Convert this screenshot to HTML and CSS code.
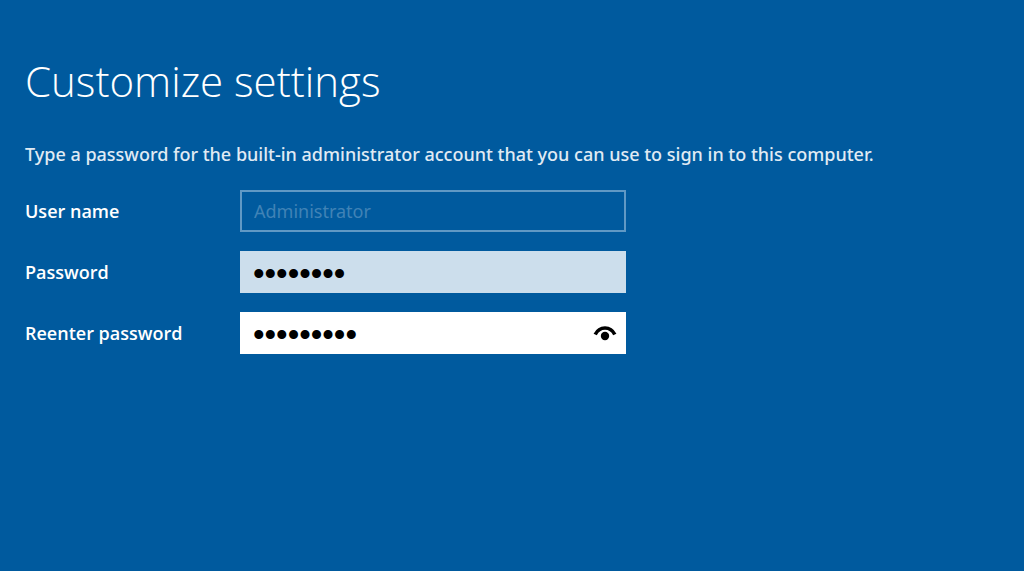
FILE: index.html
```html
<!DOCTYPE html>
<html lang="en">
<head>
<meta charset="utf-8">
<meta name="viewport" content="width=device-width, initial-scale=1">
<title>Customize settings</title>
<link rel="stylesheet" href="styles.css">
</head>
<body>
<main class="setup">
  <h1 class="title">Customize settings</h1>
  <p class="intro">Type a password for the built-in administrator account that you can use to sign in to this computer.</p>
  <form class="form">
    <label class="label" for="user">User name</label>
    <input class="field field-disabled" id="user" type="text" value="Administrator" disabled>
    <label class="label" for="password">Password</label>
    <input class="field field-password" id="password" type="password" value="password" autocomplete="new-password">
    <label class="label" for="confirm">Reenter password</label>
    <div class="field field-active">
      <input class="field-input" id="confirm" type="password" value="passwords" autocomplete="new-password">
      <button class="reveal" type="button" aria-label="Show password">
        <svg class="reveal-icon" viewBox="0 0 24 18" aria-hidden="true">
          <path d="M2.200 10.500C6.500 1.800 17.500 1.800 21.800 10.500" fill="none" stroke="currentColor" stroke-width="3.600"/>
          <circle cx="12" cy="12" r="4.200" fill="currentColor"/>
        </svg>
      </button>
    </div>
  </form>
</main>
</body>
</html>
```
FILE: styles.css
```css
* {
  box-sizing: border-box;
}

body {
  margin: 0;
  min-height: 100vh;
  background: #005a9e;
  color: #fff;
  font-family: "Noto Sans", "Open Sans", sans-serif;
  font-size: 18px;
}

.setup {
  padding: 51px 25px 24px;
}

.title {
  margin: 0;
  font-family: "Open Sans", "Noto Sans", sans-serif;
  font-size: 42px;
  font-weight: 300;
  line-height: 60px;
}

.intro {
  margin: 29px 0 22px;
  font-weight: 500;
  line-height: 28px;
  color: #e0ebf4;
}

.form {
  display: grid;
  grid-template-columns: 195px minmax(0, 386px);
  column-gap: 20px;
  row-gap: 19px;
  align-items: center;
}

.label {
  font-family: "Open Sans", "Noto Sans", sans-serif;
  font-weight: 600;
  line-height: 28px;
}

.field {
  width: 100%;
  height: 42px;
  padding: 0 12px;
  border: 0;
  border-radius: 0;
  outline: 0;
  color: #000;
  font: inherit;
}

.field-disabled {
  border: 2px solid #6099c5;
  background: transparent;
  color: #4083b6;
}

.field-password,
.field-input {
  padding: 4px 0 0 13px;
  font-family: "Liberation Sans", Arial, sans-serif;
  font-size: 33px;
}

.field-password {
  background: #ccdeec;
}

.field-active {
  display: flex;
  align-items: center;
  padding: 0 9px 0 0;
  background: #fff;
}

.field-input {
  flex: 1;
  min-width: 0;
  height: 100%;
  border: 0;
  outline: 0;
  background: transparent;
  color: #000;
}

.reveal {
  display: flex;
  padding: 0;
  border: 0;
  background: transparent;
  color: #000;
}

.reveal-icon {
  width: 24px;
  height: 18px;
}
```
